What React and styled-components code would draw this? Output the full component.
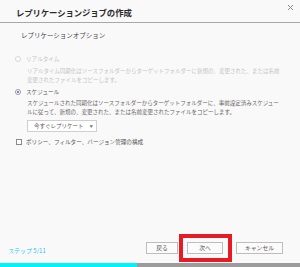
import React from 'react'
import styled, { createGlobalStyle } from 'styled-components'

const Global = createGlobalStyle`
  html, body { margin: 0; padding: 0; background: #f9f9f9; }
  * { box-sizing: border-box; }
`

const Dialog = styled.div`
  width: 300px;
  height: 267px;
  display: flex;
  flex-direction: column;
  background: #f9f9f9;
  font-family: "Noto Sans CJK JP", "Noto Sans", sans-serif;
  color: #555;
  overflow: hidden;
`

const Header = styled.div`
  height: 23px;
  display: flex;
  align-items: center;
  justify-content: space-between;
  padding: 1px 6px 0 16px;
  border-bottom: 1px solid #a8a8a8;
`

const Title = styled.div`
  font-size: 8.4px;
  font-weight: 700;
  color: #2b2b2b;
  letter-spacing: -0.1px;
`

const Close = styled.button`
  align-self: flex-start;
  margin-top: 3px;
  width: 7px;
  height: 7px;
  padding: 0;
  border: 0;
  background: none;
  display: flex;
`

const Body = styled.div`
  flex: 1;
  padding: 7px 0 0 14px;
`

const SectionTitle = styled.div`
  padding-left: 7px;
  font-size: 6.5px;
  line-height: 10px;
  color: #444;
`

const OptionRow = styled.label`
  display: flex;
  align-items: center;
  height: 10px;
  margin-top: ${p => p.$mt}px;
  font-size: 5.6px;
  color: ${p => (p.$disabled ? '#c4c4c4' : '#555')};
`

const Radio = styled.span`
  width: 6px;
  height: 6px;
  border-radius: 50%;
  margin-left: 1px;
  margin-right: 5px;
  border: 1px solid ${p => (p.$disabled ? '#d6d6d6' : '#9a9a9a')};
  background: #fff;
  display: flex;
  align-items: center;
  justify-content: center;
  &::after {
    content: '';
    width: 2.5px;
    height: 2.5px;
    border-radius: 50%;
    background: ${p => (p.$checked ? '#2f6fd6' : 'transparent')};
  }
`

const Check = styled.span`
  width: 6px;
  height: 6px;
  margin-left: 2px;
  margin-right: 4px;
  border: 1px solid #8a8a8a;
  background: #fff;
`

const Desc = styled.div`
  padding-left: 13px;
  margin-top: ${p => p.$mt}px;
  font-size: 5.5px;
  line-height: 9px;
  color: ${p => (p.$disabled ? '#c4c4c4' : '#666')};
  white-space: nowrap;
`

const Select = styled.div`
  margin: 3px 0 0 13px;
  width: 70px;
  height: 12px;
  border: 1px solid #cfcfcf;
  background: #fff;
  display: flex;
  align-items: center;
  padding-left: 6px;
  font-size: 5.5px;
  color: #555;
  span {
    margin-left: 6px;
    font-size: 3.5px;
    color: #777;
  }
`

const Footer = styled.div`
  display: flex;
  align-items: center;
  padding: 0 17px 8px 8px;
`

const Step = styled.div`
  flex: 1;
  margin-top: 5px;
  font-size: 6px;
  color: #2cc6f2;
`

const Button = styled.button`
  display: block;
  height: 12px;
  width: ${p => p.$w}px;
  padding: 0;
  border: 1px solid #bdbdbd;
  background: #fbfbfb;
  font-family: inherit;
  font-size: 5.8px;
  line-height: 10px;
  color: #555;
  margin-left: ${p => p.$ml || 0}px;
`

const Highlight = styled.div`
  position: relative;
  display: flex;
  margin-left: 9px;
  &::after {
    content: '';
    position: absolute;
    top: -8px;
    bottom: -8px;
    left: -8px;
    right: -9px;
    border: 4px solid #e61c24;
    pointer-events: none;
  }
`

const Progress = styled.div`
  height: 4px;
  background: #9c9c9c;
  display: flex;
`

const ProgressFill = styled.div`
  background: #00f2fa;
  height: 100%;
`

export default function App() {
  const step = 5
  const total = 11
  return (
    <>
      <Global />
      <Dialog>
        <Header>
          <Title>レプリケーションジョブの作成</Title>
          <Close aria-label="close">
            <svg width="7" height="7" viewBox="0 0 7 7">
              <path d="M1 1L6 6M6 1L1 6" stroke="#8a8a8a" strokeWidth="1" />
            </svg>
          </Close>
        </Header>
        <Body>
          <SectionTitle>レプリケーションオプション</SectionTitle>

          <OptionRow $mt={14} $disabled>
            <Radio $disabled />
            リアルタイム
          </OptionRow>
          <Desc $mt={3} $disabled>
            リアルタイム同期化はソースフォルダーからターゲットフォルダーに新規の、変更された、または名前
            <br />
            変更されたファイルをコピーします。
          </Desc>

          <OptionRow $mt={2}>
            <Radio $checked />
            スケジュール
          </OptionRow>
          <Desc $mt={2}>
            スケジュールされた同期化はソースフォルダーからターゲットフォルダーに、事前設定済みスケジュー
            <br />
            ルに従って、新規の、変更された、または名前変更されたファイルをコピーします。
          </Desc>
          <Select>
            今すぐレプリケート<span>▼</span>
          </Select>

          <OptionRow $mt={5}>
            <Check />
            ポリシー、フィルター、バージョン管理の構成
          </OptionRow>
        </Body>
        <Footer>
          <Step>ステップ {step}/{total}</Step>
          <Button $w={32}>戻る</Button>
          <Highlight>
            <Button $w={36}>次へ</Button>
          </Highlight>
          <Button $w={47} $ml={13}>キャンセル</Button>
        </Footer>
        <Progress>
          <ProgressFill style={{ width: `${(137 / 300) * 100}%` }} />
        </Progress>
      </Dialog>
    </>
  )
}
